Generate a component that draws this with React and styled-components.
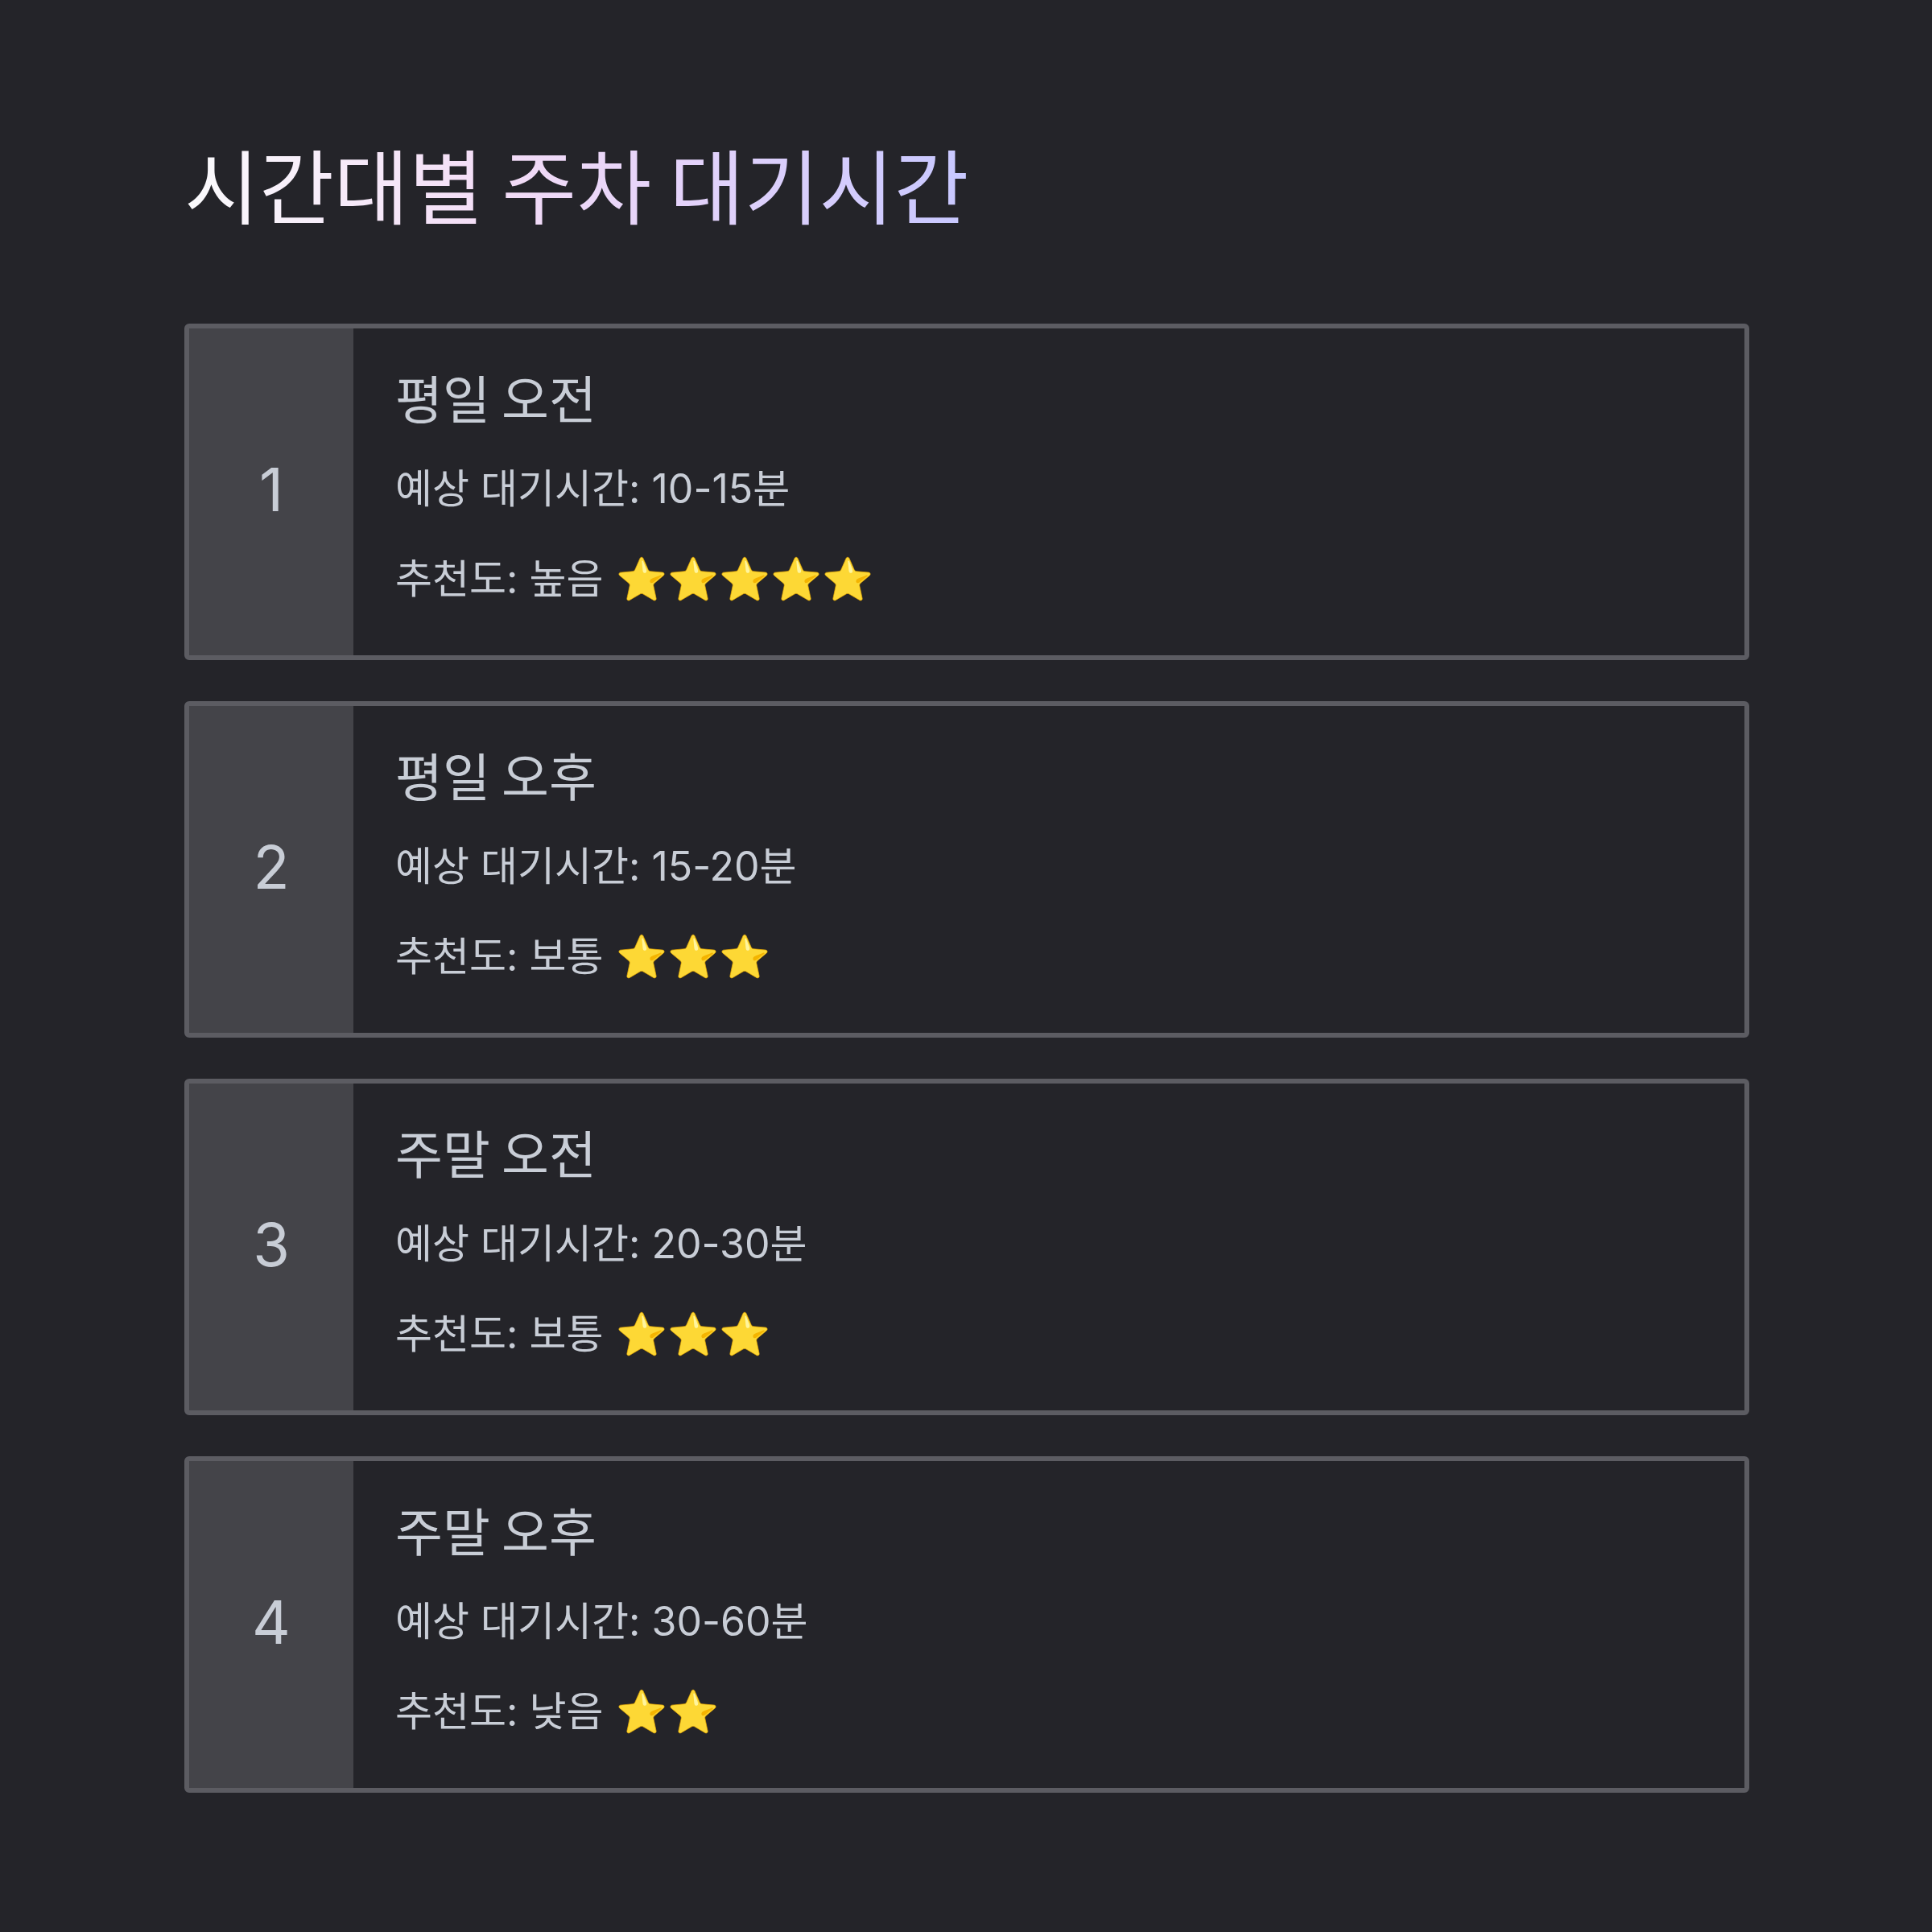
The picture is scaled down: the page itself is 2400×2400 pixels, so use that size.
import React from 'react'
import styled, { createGlobalStyle } from 'styled-components'

const slots = [
	{ id: 1, name: '평일 오전', wait: '10-15분', level: '높음', stars: 5 },
	{ id: 2, name: '평일 오후', wait: '15-20분', level: '보통', stars: 3 },
	{ id: 3, name: '주말 오전', wait: '20-30분', level: '보통', stars: 3 },
	{ id: 4, name: '주말 오후', wait: '30-60분', level: '낮음', stars: 2 },
]

const Star = () => (
	<StarIcon viewBox='0 0 128 128' aria-hidden='true'>
		<path
			fill='#fdd835'
			stroke='#e8a800'
			strokeWidth='1.5'
			d='M68.05 7.23l13.46 30.7a7.05 7.05 0 0 0 5.82 4.19l32.79 2.94c3.71.54 5.19 5.09 2.5 7.71l-24.7 20.75c-2 1.68-2.91 4.32-2.36 6.87l7.18 33.61c.63 3.69-3.24 6.51-6.56 4.76L67.56 102a7.03 7.03 0 0 0-7.12 0l-28.62 16.75c-3.31 1.74-7.19-1.07-6.56-4.76l7.18-33.61c.54-2.55-.36-5.19-2.36-6.87L5.37 52.78c-2.68-2.61-1.2-7.17 2.5-7.71l32.79-2.94a7.05 7.05 0 0 0 5.82-4.19l13.46-30.7c1.67-3.36 6.45-3.36 8.11-.01z'
		/>
		<path
			fill='#fff59d'
			d='M67.07 39.77l-2.28-22.62c-.09-1.26-.35-3.42 1.67-3.42 1.6 0 2.47 3.33 2.47 3.33l6.84 18.16c2.58 6.91 1.52 9.28-.97 10.68-2.86 1.6-7.08.35-7.73-6.13z'
		/>
		<path
			fill='#f4b400'
			d='M95.28 71.51L114.9 56.2c.97-.81 2.72-2.1 1.32-3.57-1.11-1.16-4.11.51-4.11.51l-17.17 6.71c-5.12 1.77-8.52 4.39-8.82 7.69-.39 4.4 3.56 7.79 9.16 3.97z'
		/>
	</StarIcon>
)

const App = () => {
	return (
		<>
			<GlobalStyle />
			<Page>
				<Title>시간대별 주차 대기시간</Title>
				<List>
					{slots.map((slot) => (
						<Card key={slot.id}>
							<Rank>{slot.id}</Rank>
							<Body>
								<SlotName>{slot.name}</SlotName>
								<Line>예상 대기시간: {slot.wait}</Line>
								<Line $last>
									추천도: {slot.level}
									<Stars>
										{Array.from({ length: slot.stars }).map((_, i) => (
											<Star key={i} />
										))}
									</Stars>
								</Line>
							</Body>
						</Card>
					))}
				</List>
			</Page>
		</>
	)
}

export default App

const GlobalStyle = createGlobalStyle`
	html, body {
		margin: 0;
		padding: 0;
		background: #242429;
	}
	body {
		font-family: Inter, 'Noto Sans CJK KR', sans-serif;
		color: #c8cdd6;
	}
`

const Page = styled.main`
	width: 2400px;
	min-height: 2400px;
	box-sizing: border-box;
	padding: 165px 227px 0 229px;
	background: #242429;
`

const Title = styled.h1`
	display: inline-block;
	margin: 0 0 112px;
	font-family: 'Noto Sans CJK KR', sans-serif;
	font-size: 101px;
	font-weight: 400;
	line-height: 1.24;
	background: linear-gradient(90deg, #fafafc 0%, #f3dcf6 40%, #e3d2fa 65%, #c8c8ff 100%);
	-webkit-background-clip: text;
	background-clip: text;
	color: transparent;
`

const List = styled.div`
	display: flex;
	flex-direction: column;
	gap: 51px;
`

const Card = styled.section`
	display: flex;
	height: 418px;
	box-sizing: border-box;
	border: 6px solid #5c5c62;
	border-radius: 6px;
	background: #242429;
	overflow: hidden;
`

const Rank = styled.div`
	width: 204px;
	flex-shrink: 0;
	display: flex;
	align-items: center;
	justify-content: center;
	padding-bottom: 6px;
	box-sizing: border-box;
	background: #444449;
	font-size: 74px;
	color: #c8cdd6;
`

const Body = styled.div`
	flex: 1;
	display: flex;
	flex-direction: column;
	padding: 36px 52px 0;
`

const SlotName = styled.h2`
	margin: 0 0 33px;
	font-family: 'Noto Sans CJK KR', sans-serif;
	font-size: 64px;
	font-weight: 400;
	line-height: 1.5;
	color: #c8cdd6;
`

const Line = styled.p`
	margin: 0 0 ${({ $last }) => ($last ? '0' : '43px')};
	display: flex;
	align-items: center;
	height: 69px;
	font-size: 50px;
	line-height: 1.5;
	color: #c8cdd6;
`

const Stars = styled.span`
	display: inline-flex;
	gap: 4px;
	margin-left: 18px;
`

const StarIcon = styled.svg`
	width: 60px;
	height: 60px;
`
